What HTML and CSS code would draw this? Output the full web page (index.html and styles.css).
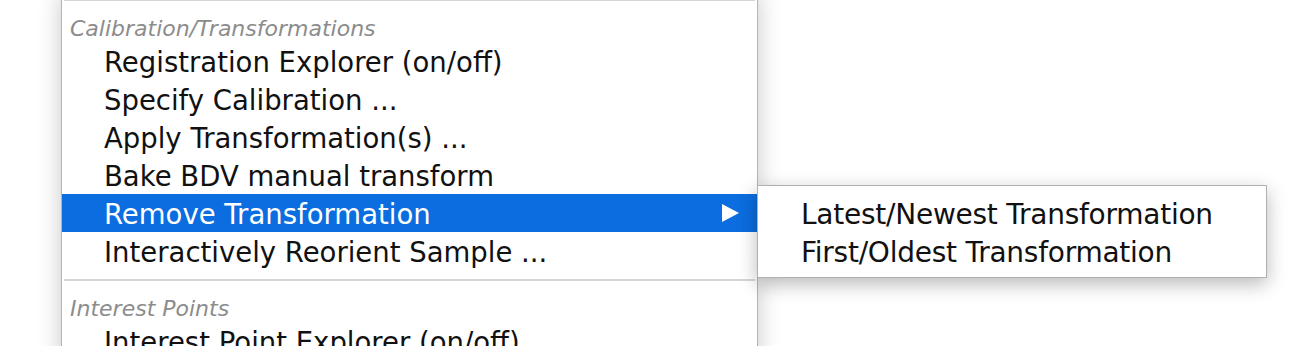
FILE: index.html
```html
<!DOCTYPE html>
<html>
<head>
<meta charset="utf-8">
<link rel="stylesheet" href="styles.css">
</head>
<body>
<div class="stage">
  <div class="menu">
    <div class="sep"><div class="line"></div></div>
    <div class="header">Calibration/Transformations</div>
    <div class="item">Registration Explorer (on/off)</div>
    <div class="item">Specify Calibration ...</div>
    <div class="item">Apply Transformation(s) ...</div>
    <div class="item">Bake BDV manual transform</div>
    <div class="item active">
      <span>Remove Transformation</span>
      <svg class="arrow" width="17" height="18" viewBox="0 0 17 18"><polygon points="0,0 17,9 0,18" fill="#ffffff"/></svg>
      <div class="submenu">
        <div class="subitem">Latest/Newest Transformation</div>
        <div class="subitem">First/Oldest Transformation</div>
      </div>
    </div>
    <div class="item">Interactively Reorient Sample ...</div>
    <div class="sep"><div class="line"></div></div>
    <div class="header">Interest Points</div>
    <div class="item">Interest Point Explorer (on/off)</div>
  </div>
</div>
</body>
</html>
```
FILE: styles.css
```css
html, body {
  margin: 0;
  padding: 0;
  background: #ffffff;
  overflow: hidden;
}
body {
  width: 1306px;
  height: 346px;
  font-family: "DejaVu Sans", "Liberation Sans", sans-serif;
}
.stage {
  display: flex;
  align-items: flex-start;
  padding-left: 61px;
  margin-top: -10px;
}
.menu {
  width: 695px;
  background: #ffffff;
  border-left: 1px solid #b4b4b4;
  border-right: 1px solid #b4b4b4;
  box-shadow: 0 4px 22px rgba(0, 0, 0, 0.22);
}
.sep {
  padding-top: 9px;
}
.line {
  height: 2px;
  margin: 0 2px;
  background: #d6d6d6;
}
.header {
  padding: 13px 0 0 8px;
  height: 28px;
  line-height: 30px;
  font-size: 22px;
  font-style: italic;
  color: #8c8c8c;
}
.item {
  position: relative;
  display: flex;
  align-items: center;
  justify-content: space-between;
  height: 38px;
  box-sizing: border-box;
  padding: 3px 18px 0 42px;
  line-height: 35px;
  font-size: 27.5px;
  color: #111111;
  white-space: nowrap;
}
.item.active {
  background: #0b6ddf;
  color: #ffffff;
}
.arrow {
  display: block;
  margin-top: -3px;
}
.submenu {
  position: absolute;
  left: 100%;
  top: -9px;
  width: 508px;
  padding: 8px 0 7px;
  background: #ffffff;
  border: 1px solid #b0b0b0;
  box-shadow: 0 6px 18px rgba(0, 0, 0, 0.28);
}
.subitem {
  height: 38px;
  box-sizing: border-box;
  padding: 3px 0 0 43px;
  line-height: 35px;
  font-size: 28px;
  letter-spacing: -0.25px;
  color: #111111;
  white-space: nowrap;
}
```
